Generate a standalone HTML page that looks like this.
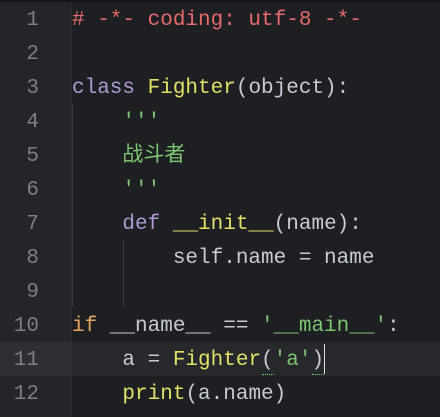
<!DOCTYPE html>
<html><head><meta charset="utf-8"><style>
html,body{margin:0;padding:0;}
body{width:440px;height:417px;background:#1e1f22;position:relative;overflow:hidden;font-family:"Liberation Mono","Noto Sans CJK SC",monospace;font-size:21px;}
.top{position:absolute;left:0;top:0;width:440px;height:2px;background:#151618;}
.gut{position:absolute;left:0;top:2px;width:72px;height:415px;background:#242529;border-right:1px solid #2c2d31;box-sizing:border-box;}
.hl{position:absolute;left:0;top:342px;width:440px;height:34px;background:#26282c;}
.hlg{position:absolute;left:0;top:342px;width:72px;height:34px;background:#2d2f34;}
.ln{position:absolute;left:0;width:39px;text-align:right;color:#7d7f84;line-height:34px;height:34px;margin-top:2px;}
.code{position:absolute;left:72px;white-space:pre;line-height:34px;height:34px;color:#c6cad1;margin-top:2px;}
.c{color:#e56a6a}.k{color:#a99bd2}.f{color:#e3e068}.s{color:#7cc46f}.o{color:#e9a460}
.g{position:absolute;width:1px;background:#3a3b3f;}
.cur{position:absolute;left:324px;top:344px;width:1px;height:30px;background:#e0e0e0;}
.u{position:absolute;top:374px;height:1px;border-top:1px dotted #5ed35e;}
</style></head><body>
<div class="top"></div>
<div class="gut"></div>
<div class="hl"></div><div class="hlg"></div>
<div class="g" style="left:72px;top:103px;height:204px"></div>
<div class="g" style="left:123px;top:240px;height:67px"></div>
<div class="ln" style="top:2px">1</div>
<div class="ln" style="top:36px">2</div>
<div class="ln" style="top:70px">3</div>
<div class="ln" style="top:104px">4</div>
<div class="ln" style="top:138px">5</div>
<div class="ln" style="top:172px">6</div>
<div class="ln" style="top:206px">7</div>
<div class="ln" style="top:240px">8</div>
<div class="ln" style="top:274px">9</div>
<div class="ln" style="top:308px">10</div>
<div class="ln" style="top:342px">11</div>
<div class="ln" style="top:376px">12</div>
<div class="code c" style="top:2px"># -*- coding: utf-8 -*-</div>
<div class="code" style="top:70px"><span class="k">class</span> <span class="f">Fighter</span>(object):</div>
<div class="code s" style="top:104px">    '''</div>
<div class="code s" style="top:138px">    战斗者</div>
<div class="code s" style="top:172px">    '''</div>
<div class="code" style="top:206px">    <span class="k">def</span> <span class="f">__init__</span>(name):</div>
<div class="code" style="top:240px">        self.name = name</div>
<div class="code" style="top:308px"><span class="o">if</span> __name__ == <span class="s">'__main__'</span>:</div>
<div class="code" style="top:342px">    a = <span class="f">Fighter</span>(<span class="s">'a'</span>)</div>
<div class="code" style="top:376px">    <span class="f">print</span>(a.name)</div>
<div class="cur"></div>
<div class="u" style="left:262px;width:12px"></div>
<div class="u" style="left:312px;width:12px"></div>
</body></html>
